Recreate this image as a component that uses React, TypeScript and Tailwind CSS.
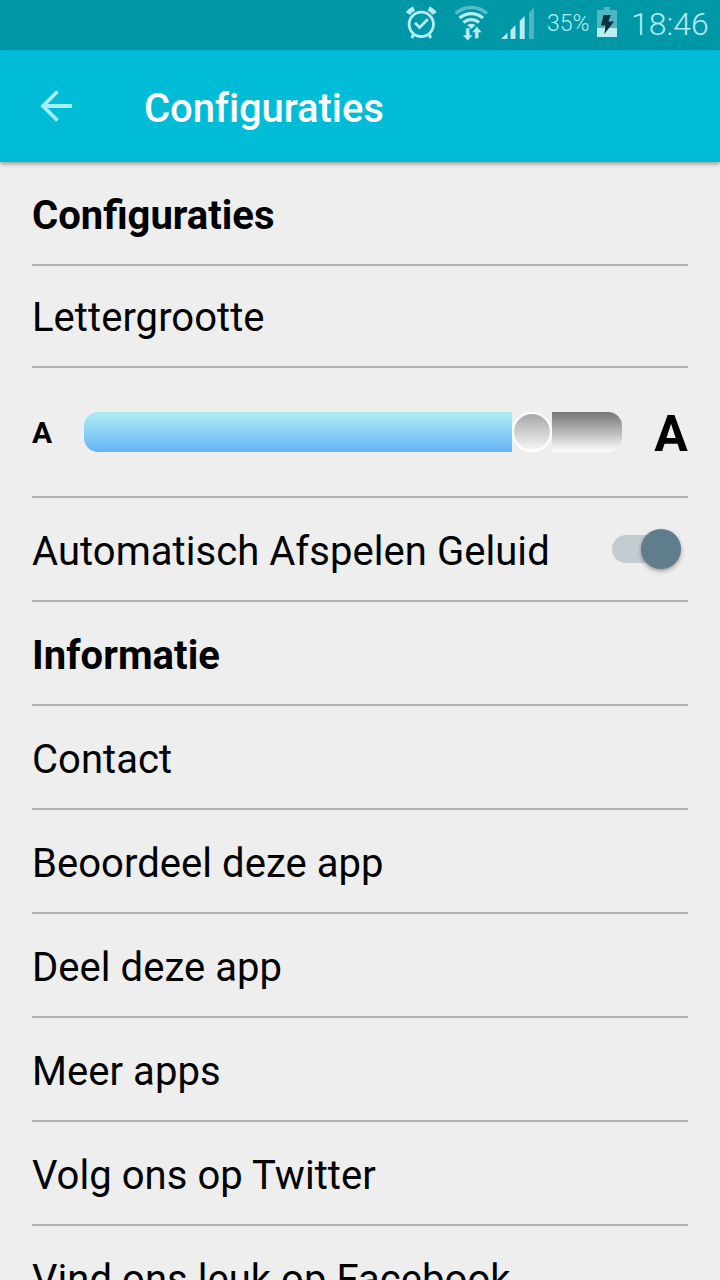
import React from "react";

const links: string[] = [
    "Contact",
    "Beoordeel deze app",
    "Deel deze app",
    "Meer apps",
    "Volg ons op Twitter",
    "Vind ons leuk op Facebook",
];

const AlarmIcon: React.FC = () => (
    <svg width="32" height="50" viewBox="0 0 32 50" fill="none" stroke="#b5edf3">
        <circle cx="16.3" cy="24.3" r="12.2" strokeWidth="2.8" />
        <path d="M10 22.8l4.6 4.6 8.2-8.2" strokeWidth="2.8" />
        <path d="M3 13.6Q4.6 10.6 9 8.6M29.6 13.6Q28 10.6 23.6 8.6" strokeWidth="4.8" />
        <path d="M8.8 34l-2 4M23.8 34l2 4" strokeWidth="3" />
    </svg>
);

const WifiIcon: React.FC = () => (
    <svg width="36" height="50" viewBox="0 0 36 50" fill="none" stroke="#b5edf3" strokeWidth="3.2">
        <path d="M2.5 13.5Q9.5 7.5 18.3 7.5T34 13.5" stroke="#59bdc7" strokeWidth="3.6" />
        <path d="M6.5 18Q12 13.7 18.3 13.7T30 18" />
        <path d="M10.5 22.5Q14 19.7 18.3 19.7T26 22.5" />
        <path d="M14.2 25q4.1-2.5 8.2 0l-4.1 4z" fill="#b5edf3" stroke="none" />
        <path d="M12.8 28h4v7h3.2l-5.2 5.7-5.3-5.7h3.3zM21.8 38.5h4V32.5h3.4l-5.4-6-5.2 6h3.2z" fill="#b5edf3" stroke="#0097a7" strokeWidth=".5" />
    </svg>
);

const SignalIcon: React.FC = () => (
    <svg width="34" height="50" viewBox="0 0 34 50" fill="#b5edf3">
        <path d="M0 39l6.5-6.5V39zM9.5 30l5-5v14h-5zM18.7 21l5-5v23h-5z" />
        <path d="M28 12.5l5-5V39h-5z" fill="#4db6c1" />
    </svg>
);

const BatteryIcon: React.FC = () => (
    <svg width="20" height="50" viewBox="0 0 20 50">
        <path d="M7 7h6v3h7v18H0V10h7z" fill="#4fb7c2" />
        <path d="M0 28h20v9H0z" fill="#b9eff4" />
        <path d="M6.5 15h7.3l-2.5 6.5H17L7.3 34l1.3-8.5H4z" fill="#06333b" />
    </svg>
);

const Slider: React.FC = () => (
    <div className="flex h-10 w-[538px] overflow-hidden rounded-[14px]">
        <div className="w-[428px] bg-linear-to-b from-[#b2ebf2] to-[#64b5f6]" />
        <div className="h-10 w-10 rounded-full border-2 border-white bg-linear-to-b from-[#a8a8a8] to-[#f7f7f7]" />
        <div className="flex-1 bg-linear-to-b from-[#777777] to-white" />
    </div>
);

const Switch: React.FC = () => (
    <div className="mr-[7px] -mt-1.5 flex h-7 w-[69px] items-center justify-end rounded-full bg-[#c2cdd2]">
        <div className="h-10 w-10 rounded-full bg-[#607d8b] shadow-[0_2px_4px_rgba(0,0,0,0.35)]" />
    </div>
);

interface RowProps {
    children: React.ReactNode;
    className?: string;
}

const Row: React.FC<RowProps> = ({ children, className = "h-[104px] pt-1.5" }) => (
    <div className={`flex shrink-0 items-center justify-between border-b-2 border-[#b2b2b2] tracking-[0.05px] ${className}`}>
        {children}
    </div>
);

const App: React.FC = () => {
    return (
        <div className="flex h-[1280px] w-[720px] flex-col overflow-hidden bg-[#eeeeee] font-['Roboto',sans-serif] text-[40px] leading-[48px] text-black">
            <div className="flex h-[50px] shrink-0 bg-[#0097a7] pl-[405px] text-[#b5edf3]">
                <AlarmIcon />
                <div className="ml-4 flex"><WifiIcon /></div>
                <div className="ml-3 flex"><SignalIcon /></div>
                <span className="ml-3 w-[44px] whitespace-nowrap text-[23px] leading-[48px] font-[350]">35%</span>
                <div className="ml-[6px] flex"><BatteryIcon /></div>
                <span className="ml-[14px] whitespace-nowrap text-[32px] leading-[48px] font-[350]">18:46</span>
            </div>

            <header className="z-10 flex h-28 shrink-0 items-center bg-[#00bcd7] pl-10 shadow-[0_2px_4px_rgba(0,0,0,0.35)]">
                <svg width="32" height="32" viewBox="0 0 32 32" fill="none" stroke="#a5f0fb" strokeWidth="3.8">
                    <path d="M32 16H4M17.5 1.5L3 16l14.5 14.5" />
                </svg>
                <h1 className="mt-1.5 ml-[72px] font-medium tracking-[-0.08px] text-white [font-variant-ligatures:common-ligatures]">Configuraties</h1>
            </header>

            <main className="flex flex-col px-8">
                <Row><h2 className="font-bold tracking-normal">Configuraties</h2></Row>
                <Row className="h-[102px] pt-1">Lettergrootte</Row>
                <Row className="h-[130px]">
                    <span className="pt-0.5 text-[30px] font-bold">A</span>
                    <Slider />
                    <span className="pt-[3px] text-[50px] font-bold">A</span>
                </Row>
                <Row>
                    Automatisch Afspelen Geluid
                    <Switch />
                </Row>
                <Row><h2 className="font-bold">Informatie</h2></Row>
                {links.map((link: string) => (
                    <Row key={link}>{link}</Row>
                ))}
            </main>
        </div>
    );
};

export default App;
